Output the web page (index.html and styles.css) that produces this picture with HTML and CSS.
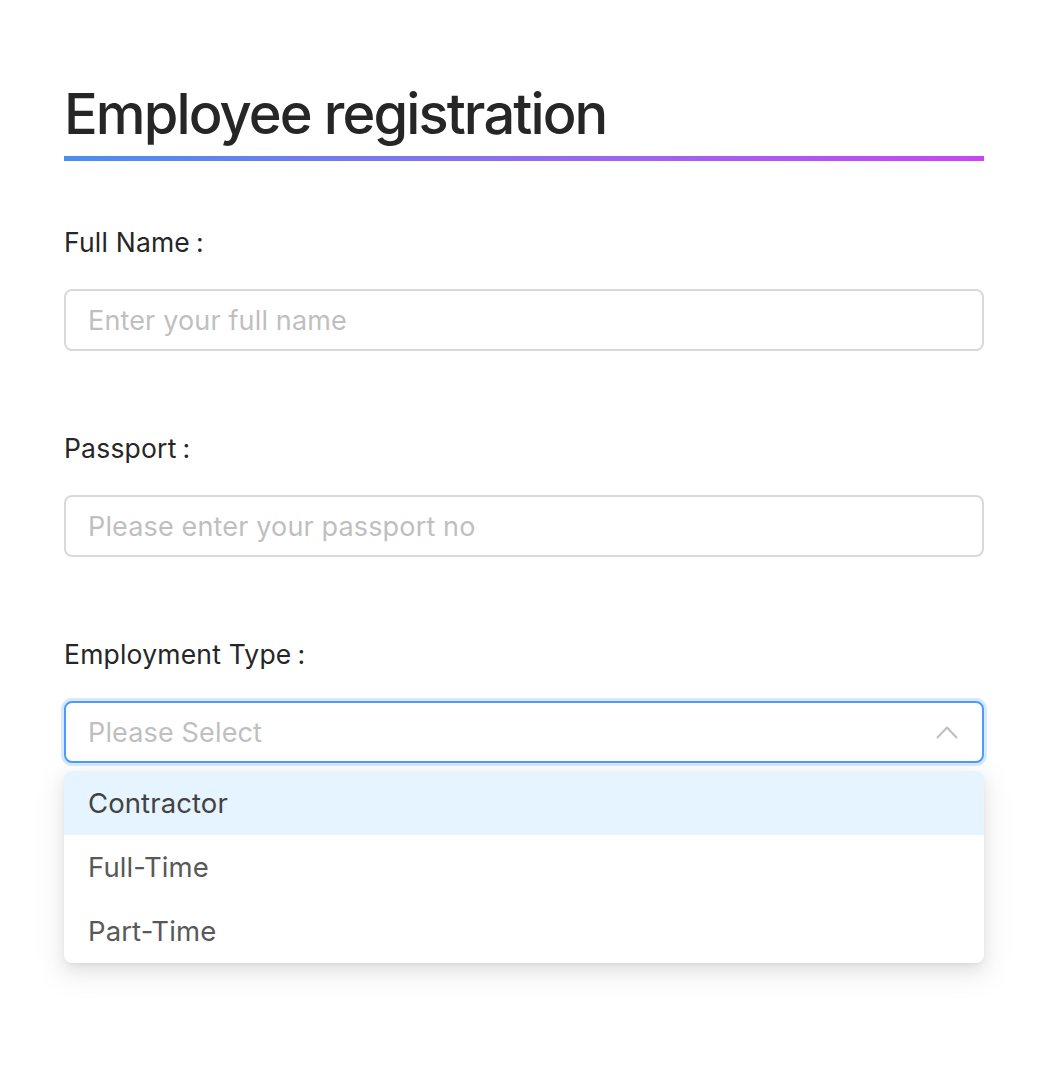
FILE: index.html
```html
<!DOCTYPE html>
<html lang="en">
<head>
<meta charset="utf-8">
<title>Employee registration</title>
<link rel="stylesheet" href="styles.css">
</head>
<body>
<main class="page">
  <h1 class="title">Employee registration</h1>
  <div class="title-bar"></div>
  <form class="form">
    <div class="field">
      <label class="label" for="fullname">Full Name</label>
      <input class="input" id="fullname" type="text" placeholder="Enter your full name">
    </div>
    <div class="field">
      <label class="label" for="passport">Passport</label>
      <input class="input" id="passport" type="text" placeholder="Please enter your passport no">
    </div>
    <div class="field">
      <label class="label">Employment Type</label>
      <div class="select-wrap">
        <div class="select">
          <span class="select-placeholder">Please Select</span>
          <svg class="select-arrow" width="22" height="14" viewBox="0 0 22 14" aria-hidden="true">
            <path d="M1.5 12.5 L11 2.5 L20.5 12.5" fill="none" stroke="#bfbfbf" stroke-width="2" stroke-linecap="round" stroke-linejoin="round"/>
          </svg>
        </div>
        <ul class="dropdown">
          <li class="option option-active">Contractor</li>
          <li class="option">Full-Time</li>
          <li class="option">Part-Time</li>
        </ul>
      </div>
    </div>
  </form>
</main>
</body>
</html>
```

FILE: styles.css
```css
* { box-sizing: border-box; }
html, body { margin: 0; padding: 0; background: #ffffff; }
body {
  font-family: "Inter", "Noto Sans", "Liberation Sans", sans-serif;
  color: #262626;
  min-height: 1078px;
}
.page {
  width: 920px;
  min-height: 1078px;
  margin: 0 0 0 64px;
  padding-top: 80px;
}
.title {
  margin: 0;
  font-size: 56px;
  line-height: 68px;
  font-weight: 500;
  color: #262626;
  letter-spacing: -1.9px;
}
.title-bar {
  height: 5px;
  margin-top: 8px;
  background: linear-gradient(90deg, #4a8ef0 0%, #8f6cf2 50%, #c846f2 100%);
}
.form {
  display: flex;
  flex-direction: column;
  margin-top: 65px;
}
.field {
  display: flex;
  flex-direction: column;
  margin-bottom: 81px;
}
.label {
  font-size: 26.5px;
  line-height: 32px;
  color: #262626;
  margin-bottom: 31px;
  letter-spacing: 0.2px;
}
.label::after {
  content: ":";
  margin-left: 6px;
}
.input, .select {
  width: 100%;
  height: 62px;
  border: 2px solid #d9d9d9;
  border-radius: 8px;
  padding: 0 22px;
  font-family: inherit;
  font-size: 27px;
  letter-spacing: 0.15px;
  color: #262626;
  background: #fff;
  outline: none;
}
.input::placeholder { color: #bfbfbf; }
.select-wrap { position: relative; }
.select {
  display: flex;
  align-items: center;
  justify-content: space-between;
  border-color: #4d9cf8;
  box-shadow: 0 0 0 3px #d8e9fd;
}
.select-placeholder { color: #bfbfbf; }
.select-arrow { margin-right: 2px; }
.dropdown {
  position: absolute;
  left: 0;
  right: 0;
  top: 70px;
  margin: 0;
  padding: 0;
  list-style: none;
  background: #fff;
  border-radius: 8px;
  overflow: hidden;
  box-shadow: 0 6px 16px 0 rgba(0,0,0,0.08), 0 3px 6px -4px rgba(0,0,0,0.12), 0 9px 28px 8px rgba(0,0,0,0.05);
}
.option {
  height: 64px;
  display: flex;
  align-items: center;
  padding: 0 24px;
  font-size: 27.5px;
  letter-spacing: 0.1px;
  color: #595959;
}
.option-active {
  background: #e6f4ff;
  color: #434343;
}
```
